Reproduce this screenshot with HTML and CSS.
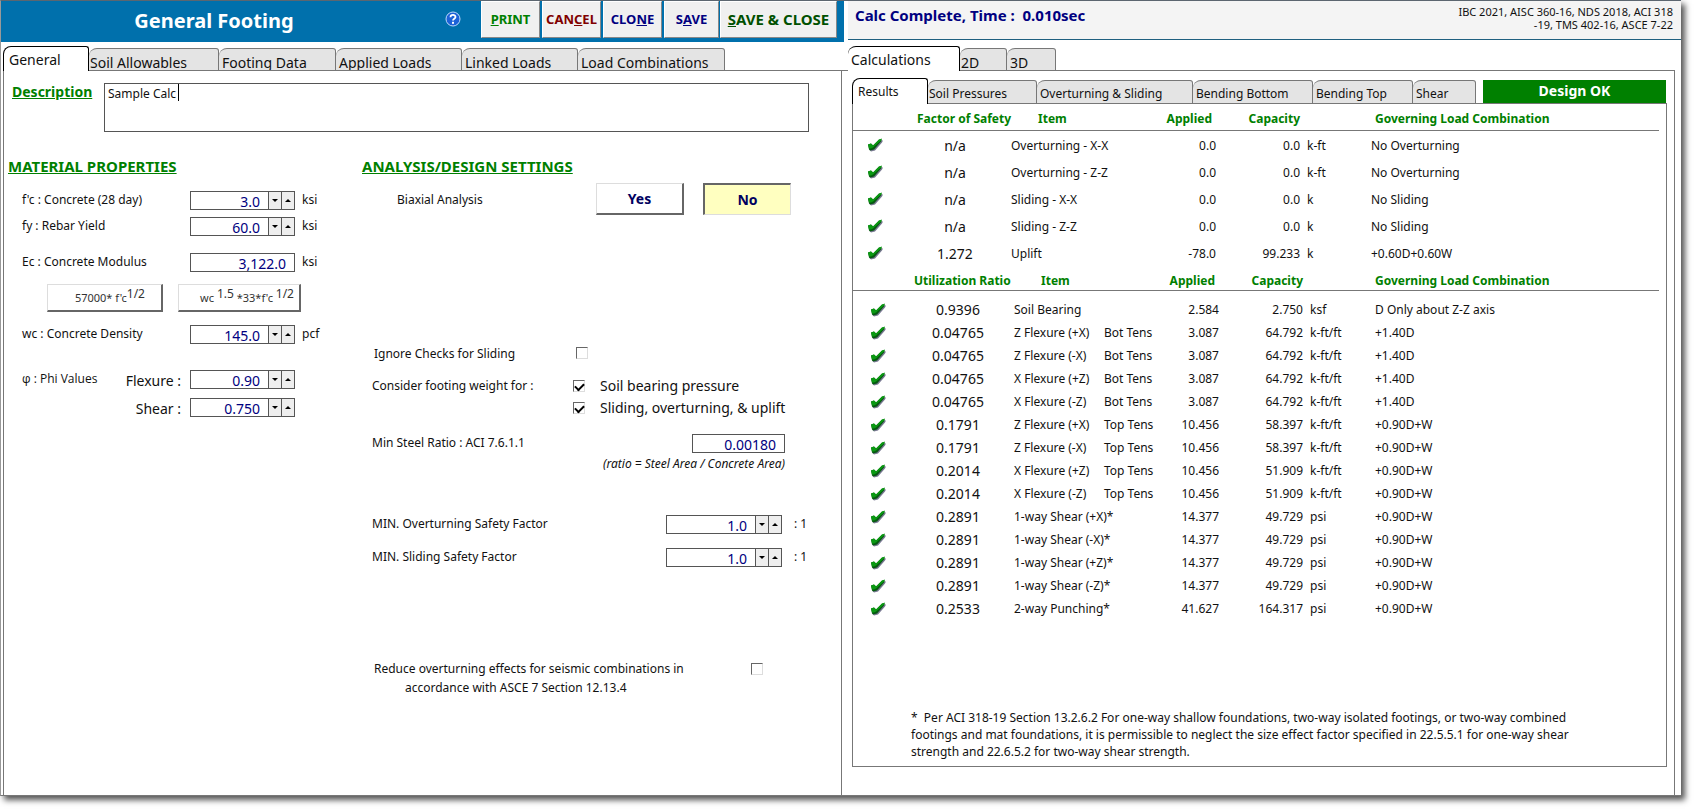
FILE: index.html
```html
<!DOCTYPE html>
<html lang="en">
  <head>
  <meta charset="UTF-8">
  <title>General Footing</title>
  <link rel="stylesheet" href="styles.css">
  </head>

  <body>
    <svg class="defs" aria-hidden="true">
      <symbol id="ok" viewBox="0 0 15 13">
        <path d="M1 7 L4 6 L6 8 L12 2 L15 2 L14 4 L7 12 L3 13 L2 12 Z" fill="#777790"/>
        <path d="M0 6 L3 5 L5 7 L11 1 L14 1 L13 3 L6 11 L2 12 L1 11 Z" fill="#065a10"/>
        <path d="M0 6 L3 5 L5 7 L11 1 L14 0 L13 2 L5 9 L3 10 L1 10 Z" fill="#0a9a12"/>
      </symbol>
    </svg>

    <div class="window">
      <section class="pane left">
        <header class="bar">
          <h1>General Footing</h1>
          <a href="#help" class="help" aria-label="Help">
            <svg width="16" height="16" viewBox="0 0 16 16">
              <circle cx="8" cy="8" r="7" fill="#1c62d8" stroke="#bcd8fa"/>
              <path d="M5.5 6.2 C5.5 3.2 10.5 3.2 10.5 6 C10.5 7.8 8 7.8 8 9.6" fill="none" stroke="#fff" stroke-width="1.8"/>
              <rect x="7" y="10.8" width="2" height="2" fill="#fff"/>
            </svg>
          </a>
          <div class="actions">
            <button class="green"><u>P</u>RINT</button>
            <button class="red">CAN<u>C</u>EL</button>
            <button>CLO<u>N</u>E</button>
            <button class="save">S<u>A</u>VE</button>
            <button class="close"><u>S</u>AVE &amp; CLOSE</button>
          </div>
        </header>

        <nav class="tabs main">
          <button class="on t1">General</button>
          <button class="t2">Soil Allowables</button>
          <button class="t3">Footing Data</button>
          <button class="t4">Applied Loads</button>
          <button class="t5">Linked Loads</button>
          <button class="t6">Load Combinations</button>
        </nav>

        <div class="page form">
          <div class="desc">
            <label for="desc">Description</label>
            <div class="descbox">
              <textarea id="desc">Sample Calc</textarea>
              <span class="caret"></span>
            </div>
          </div>

          <div class="cols">
            <div class="material">
              <h2>MATERIAL PROPERTIES</h2>
              <div class="row">
                <label for="fc">f'c : Concrete (28 day)</label>
                <span class="spin"><input id="fc" value="3.0"><button class="dn" aria-label="Less"></button><button class="up" aria-label="More"></button></span>
                <span>ksi</span>
              </div>
              <div class="row">
                <label for="fy">fy : Rebar Yield</label>
                <span class="spin"><input id="fy" value="60.0"><button class="dn" aria-label="Less"></button><button class="up" aria-label="More"></button></span>
                <span>ksi</span>
              </div>
              <div class="row ec">
                <label for="ec">Ec : Concrete Modulus</label>
                <span class="spin"><input id="ec" value="3,122.0"></span>
                <span>ksi</span>
              </div>
              <div class="formulas">
                <button>57000* f'c<sup>1/2</sup></button>
                <button>wc <sup>1.5</sup> *33*f'c <sup>1/2</sup></button>
              </div>
              <div class="row">
                <label for="wc">wc : Concrete Density</label>
                <span class="spin"><input id="wc" value="145.0"><button class="dn" aria-label="Less"></button><button class="up" aria-label="More"></button></span>
                <span>pcf</span>
              </div>
              <div class="row phi">
                <span>φ : Phi Values</span>
                <label for="flex">Flexure :</label>
                <span class="spin"><input id="flex" value="0.90"><button class="dn" aria-label="Less"></button><button class="up" aria-label="More"></button></span>
              </div>
              <div class="row phi2">
                <label for="shear">Shear :</label>
                <span class="spin"><input id="shear" value="0.750"><button class="dn" aria-label="Less"></button><button class="up" aria-label="More"></button></span>
              </div>
            </div>

            <div class="settings">
              <h2>ANALYSIS/DESIGN SETTINGS</h2>
              <div class="biaxial">
                <span>Biaxial Analysis</span>
                <button>Yes</button>
                <button class="on">No</button>
              </div>
              <div class="check ignore">
                <label for="ign">Ignore Checks for Sliding</label>
                <input type="checkbox" id="ign">
              </div>
              <div class="check weight">
                <span>Consider footing weight for :</span>
                <div class="opts">
                  <label><input type="checkbox" checked> Soil bearing pressure</label>
                  <label><input type="checkbox" checked> Sliding, overturning, &amp; uplift</label>
                </div>
              </div>
              <div class="ratio">
                <label for="steel">Min Steel Ratio : ACI 7.6.1.1</label>
                <span class="spin"><input id="steel" value="0.00180"></span>
              </div>
              <p class="hint">(ratio = Steel Area / Concrete Area)</p>
              <div class="factor">
                <label for="ot">MIN. Overturning Safety Factor</label>
                <span class="spin"><input id="ot" value="1.0"><button class="dn" aria-label="Less"></button><button class="up" aria-label="More"></button></span>
                <span>: 1</span>
              </div>
              <div class="factor">
                <label for="sl">MIN. Sliding Safety Factor</label>
                <span class="spin"><input id="sl" value="1.0"><button class="dn" aria-label="Less"></button><button class="up" aria-label="More"></button></span>
                <span>: 1</span>
              </div>
              <div class="check reduce">
                <label for="red">Reduce overturning effects for seismic combinations in <span>accordance with ASCE 7 Section 12.13.4</span></label>
                <input type="checkbox" id="red">
              </div>
            </div>
          </div>
        </div>
      </section>

      <section class="pane right">
        <header class="status">
          <strong>Calc Complete, Time :&nbsp; 0.010sec</strong>
          <p>IBC 2021, AISC 360-16, NDS 2018, ACI 318<br>-19, TMS 402-16, ASCE 7-22</p>
        </header>
        <nav class="tabs main">
          <button class="on c1">Calculations</button>
          <button class="c2">2D</button>
          <button class="c3">3D</button>
        </nav>
        <div class="page calc">
          <nav class="tabs sub">
            <button class="on r1">Results</button>
            <button class="r2">Soil Pressures</button>
            <button class="r3">Overturning &amp; Sliding</button>
            <button class="r4">Bending Bottom</button>
            <button class="r5">Bending Top</button>
            <button class="r6">Shear</button>
            <span class="ok">Design OK</span>
          </nav>
          <div class="results">
            <table class="safety">
              <colgroup><col class="k"><col class="f"><col class="i"><col class="a"><col class="c"><col class="u"><col></colgroup>
              <thead>
                <tr><th></th><th>Factor of Safety</th><th>Item</th><th>Applied</th><th>Capacity</th><th></th><th>Governing Load Combination</th></tr>
              </thead>
              <tbody>
                <tr><td><svg><use href="#ok"/></svg></td><td>n/a</td><td>Overturning - X-X</td><td>0.0</td><td>0.0</td><td>k-ft</td><td>No Overturning</td></tr>
                <tr><td><svg><use href="#ok"/></svg></td><td>n/a</td><td>Overturning - Z-Z</td><td>0.0</td><td>0.0</td><td>k-ft</td><td>No Overturning</td></tr>
                <tr><td><svg><use href="#ok"/></svg></td><td>n/a</td><td>Sliding - X-X</td><td>0.0</td><td>0.0</td><td>k</td><td>No Sliding</td></tr>
                <tr><td><svg><use href="#ok"/></svg></td><td>n/a</td><td>Sliding - Z-Z</td><td>0.0</td><td>0.0</td><td>k</td><td>No Sliding</td></tr>
                <tr><td><svg><use href="#ok"/></svg></td><td>1.272</td><td>Uplift</td><td>-78.0</td><td>99.233</td><td>k</td><td>+0.60D+0.60W</td></tr>
              </tbody>
            </table>

            <table class="util">
              <colgroup><col class="k"><col class="f"><col class="i"><col class="a"><col class="c"><col class="u"><col></colgroup>
              <thead>
                <tr><th></th><th>Utilization Ratio</th><th>Item</th><th>Applied</th><th>Capacity</th><th></th><th>Governing Load Combination</th></tr>
              </thead>
              <tbody>
                <tr><td><svg><use href="#ok"/></svg></td><td>0.9396</td><td>Soil Bearing</td><td>2.584</td><td>2.750</td><td>ksf</td><td>D Only about Z-Z axis</td></tr>
                <tr><td><svg><use href="#ok"/></svg></td><td>0.04765</td><td><span>Z Flexure (+X)</span>Bot Tens</td><td>3.087</td><td>64.792</td><td>k-ft/ft</td><td>+1.40D</td></tr>
                <tr><td><svg><use href="#ok"/></svg></td><td>0.04765</td><td><span>Z Flexure (-X)</span>Bot Tens</td><td>3.087</td><td>64.792</td><td>k-ft/ft</td><td>+1.40D</td></tr>
                <tr><td><svg><use href="#ok"/></svg></td><td>0.04765</td><td><span>X Flexure (+Z)</span>Bot Tens</td><td>3.087</td><td>64.792</td><td>k-ft/ft</td><td>+1.40D</td></tr>
                <tr><td><svg><use href="#ok"/></svg></td><td>0.04765</td><td><span>X Flexure (-Z)</span>Bot Tens</td><td>3.087</td><td>64.792</td><td>k-ft/ft</td><td>+1.40D</td></tr>
                <tr><td><svg><use href="#ok"/></svg></td><td>0.1791</td><td><span>Z Flexure (+X)</span>Top Tens</td><td>10.456</td><td>58.397</td><td>k-ft/ft</td><td>+0.90D+W</td></tr>
                <tr><td><svg><use href="#ok"/></svg></td><td>0.1791</td><td><span>Z Flexure (-X)</span>Top Tens</td><td>10.456</td><td>58.397</td><td>k-ft/ft</td><td>+0.90D+W</td></tr>
                <tr><td><svg><use href="#ok"/></svg></td><td>0.2014</td><td><span>X Flexure (+Z)</span>Top Tens</td><td>10.456</td><td>51.909</td><td>k-ft/ft</td><td>+0.90D+W</td></tr>
                <tr><td><svg><use href="#ok"/></svg></td><td>0.2014</td><td><span>X Flexure (-Z)</span>Top Tens</td><td>10.456</td><td>51.909</td><td>k-ft/ft</td><td>+0.90D+W</td></tr>
                <tr><td><svg><use href="#ok"/></svg></td><td>0.2891</td><td>1-way Shear (+X)*</td><td>14.377</td><td>49.729</td><td>psi</td><td>+0.90D+W</td></tr>
                <tr><td><svg><use href="#ok"/></svg></td><td>0.2891</td><td>1-way Shear (-X)*</td><td>14.377</td><td>49.729</td><td>psi</td><td>+0.90D+W</td></tr>
                <tr><td><svg><use href="#ok"/></svg></td><td>0.2891</td><td>1-way Shear (+Z)*</td><td>14.377</td><td>49.729</td><td>psi</td><td>+0.90D+W</td></tr>
                <tr><td><svg><use href="#ok"/></svg></td><td>0.2891</td><td>1-way Shear (-Z)*</td><td>14.377</td><td>49.729</td><td>psi</td><td>+0.90D+W</td></tr>
                <tr><td><svg><use href="#ok"/></svg></td><td>0.2533</td><td>2-way Punching*</td><td>41.627</td><td>164.317</td><td>psi</td><td>+0.90D+W</td></tr>
              </tbody>
            </table>

            <p class="note">*&nbsp; Per ACI 318-19 Section 13.2.6.2 For one-way shallow foundations, two-way isolated footings, or two-way combined<br>
            footings and mat foundations, it is permissible to neglect the size effect factor specified in 22.5.5.1 for one-way shear<br>
            strength and 22.6.5.2 for two-way shear strength.</p>
          </div>
        </div>
      </section>
    </div>
  </body>
</html>
```

FILE: styles.css
```css
* { box-sizing: border-box; }
body {
  margin: 0;
  padding: 0 15px 15px 0;
  height: 100vh;
  background: #fff;
  color: #111;
  font: 12px/17px "Noto Sans", "Open Sans", sans-serif;
}
button, input, textarea { font: inherit; color: inherit; margin: 0; padding: 0; border-radius: 0; }
h1, h2, p { margin: 0; }
.defs { display: none; }

.window {
  display: flex;
  height: 100%;
  min-height: 780px;
  border-top: 1px solid #5c6670;
  border-left: 1px solid #999;
  border-bottom: 1px solid #777;
  box-shadow: 4px 4px 6px #555;
}
.pane { display: flex; flex-direction: column; min-width: 0; }
.left { flex: 843; }
.right { flex: 837; }

/* top bars */
.bar { display: flex; align-items: flex-start; height: 41px; background: #0070ac; }
.bar h1 { flex: 1; text-align: center; color: #fff; font-size: 20px; line-height: 40px; }
.help { width: 54px; padding: 10px 0 0 18px; }
.actions { display: flex; gap: 2px; margin-right: 7px; }
.actions button {
  width: 59px;
  height: 37px;
  background: #f0f0f0;
  border: 1px solid;
  border-color: #fff #888 #888 #fff;
  color: #000080;
  font-size: 13px;
  font-weight: bold;
}
.actions .green { color: #008000; }
.actions .red { color: #800000; }
.actions .save { width: 55px; }
.actions .close { width: 117px; color: #005000; font-size: 15px; margin-left: -1px; }
.status {
  display: flex;
  justify-content: space-between;
  height: 39px;
  margin-left: 4px;
  padding: 4px 8px 0 7px;
  background: #f4f4f4;
  border-bottom: 1px solid #206080;
}
.status strong { color: #000080; font-size: 15px; line-height: 20px; }
.status p { font-size: 11px; line-height: 13px; text-align: right; }

/* tabs */
.tabs { display: flex; align-items: flex-end; position: relative; z-index: 1; margin-bottom: -1px; }
.tabs button {
  height: 23px;
  padding: 0 0 0 3px;
  background: #e4e4e4;
  border: 1px solid #777;
  border-left-width: 0;
  border-radius: 8px 3px 0 0;
  text-align: left;
  white-space: nowrap;
  overflow: hidden;
}
.tabs .on { height: 25px; background: #fff; border: 1px solid #000; border-bottom: 0; padding-left: 5px; }
.tabs .on + button { padding-left: 1px; }
.tabs.main { height: 29px; font-size: 14px; }
.tabs.main button { line-height: 28px; }
.tabs.main .on { line-height: 26px; }
.left .tabs { padding-left: 2px; }
.t1 { width: 86px; }
.t2 { width: 130px; }
.t3 { width: 117px; }
.t4 { width: 126px; }
.t5 { width: 116px; }
.t6 { width: 147px; }
.right .tabs.main { margin-left: 4px; margin-top: 2px; }
.c1 { width: 112px; }
.tabs .c1 { border-left: 0; padding-left: 3px; }
.c2 { width: 47px; }
.c3 { width: 49px; }
.tabs.sub { height: 26px; }
.tabs.sub button { height: 24px; line-height: 26px; }
.tabs.sub .on { height: 26px; line-height: 24px; }
.r1 { width: 76px; }
.r2 { width: 109px; }
.r3 { width: 156px; }
.r4 { width: 120px; }
.r5 { width: 100px; }
.r6 { width: 63px; }
.ok {
  flex: 1;
  height: 23px;
  margin: 0 1px 1px 7px;
  background: #008000;
  color: #fff;
  font-size: 14px;
  line-height: 22px;
  font-weight: bold;
  text-align: center;
}

.page { flex: 1; border: 1px solid #777; border-bottom: 0; }
.left .page { margin-left: 2px; padding: 12px 35px 0 8px; border-right: 0; }
.right .page { margin-right: 6px; margin-left: -3px; }

/* left form */
.desc { display: flex; }
.desc label { width: 92px; color: #008000; font-size: 14px; line-height: 18px; font-weight: bold; text-decoration: underline; }
.descbox { position: relative; flex: 1; height: 49px; }
.desc textarea { width: 100%; height: 100%; resize: none; border: 1px solid #555; padding: 1px 3px; display: block; outline: 0; }
.caret { position: absolute; left: 74px; top: 1px; width: 1px; height: 17px; background: #000; }
h2 { color: #008000; font-size: 15px; line-height: 20px; text-decoration: underline; }
.cols { display: grid; grid-template-columns: 354px 1fr; margin: 24px -31px 0 -4px; }
.row { display: flex; align-items: flex-start; margin: 0 0 7px 14px; }
.row label { width: 168px; }
.spin { display: flex; width: 105px; height: 19px; border: 1px solid #555; margin-right: 7px; }
.spin input { flex: 1; min-width: 0; border: 0; background: #fff; color: #000080; font-size: 14px; text-align: right; padding: 2px 8px 0 0; }
.spin button { width: 13px; background: #eee; border: 0; border-left: 1px solid #555; display: flex; align-items: center; justify-content: center; }
.spin button::after { content: ""; border: 3px solid transparent; }
.spin .dn::after { border-top-color: #000; border-bottom: 0; }
.spin .up::after { border-bottom-color: #000; border-top: 0; }
.material h2 { margin-bottom: 15px; }
.material .ec { margin: 17px 0 12px 14px; }
.formulas { display: flex; gap: 15px; margin: 0 0 13px 39px; }
.formulas button { width: 116px; height: 28px; padding-right: 16px; text-align: right; font-size: 11px; line-height: 16px; }
.formulas button + button { width: 123px; padding-right: 5px; }
.formulas button, .biaxial button { background: #fff; border: 1px solid #ddd; border-right: 2px solid #666; border-bottom: 2px solid #666; }
.formulas button { color: #333; }
sup { font-size: 12px; line-height: 0; vertical-align: 4px; }
.material .phi { margin-top: 26px; }
.phi span:first-child { width: 80px; font-family: "Open Sans", sans-serif; }
.phi label, .phi2 label { width: 88px; padding-right: 9px; text-align: right; font-size: 14px; line-height: 21px; }
.phi2 label { width: 168px; }

.biaxial { display: flex; margin: 7px 0 0 35px; }
.biaxial span { width: 199px; line-height: 33px; }
.biaxial button { width: 88px; height: 32px; margin-right: 19px; color: #000060; font-size: 14px; font-weight: bold; }
.biaxial .on { background: #ffffc0; border: 1px solid #ddd; border-top: 2px solid #666; border-left: 2px solid #666; }
.check { display: flex; }
.check input {
  appearance: none;
  width: 12px;
  height: 12px;
  border: 1px solid;
  border-color: #666 #ddd #ddd #666;
  background: #fff;
}
.check input:checked::after {
  content: "";
  display: block;
  width: 7px;
  height: 4px;
  margin: 2px 0 0 1px;
  border: solid #000;
  border-width: 0 0 2px 2px;
  transform: rotate(-45deg);
}
.ignore { margin: 129px 0 0 12px; }
.ignore label { width: 202px; }
.ignore input { margin-top: 2px; }
.weight { margin: 14px 0 0 10px; }
.weight > span { width: 201px; line-height: 20px; }
.opts { display: grid; gap: 2px; }
.opts label { display: flex; align-items: center; gap: 15px; font-size: 14px; line-height: 20px; }
.ratio, .factor { display: flex; margin-left: 10px; }
.ratio { margin-top: 16px; }
.ratio label { width: 320px; }
.ratio .spin { width: 93px; }
.hint { width: 423px; margin-top: 2px; font-style: italic; text-align: right; }
.hint + .factor { margin-top: 43px; }
.factor { margin-bottom: 14px; }
.factor label { width: 294px; }
.factor .spin { width: 116px; margin-right: 12px; }
.reduce { margin: 92px 0 0 12px; }
.reduce label { width: 377px; line-height: 19px; }
.reduce label span { display: block; padding-left: 31px; }
.reduce input { margin-top: 4px; }

/* results */
.calc { display: flex; flex-direction: column; padding: 7px 7px 28px 10px; }
.results { flex: 1; display: flex; flex-direction: column; border: 1px solid #777; padding-right: 7px; }
table { width: 100%; border-collapse: collapse; table-layout: fixed; }
.k { width: 46px; }
.f { width: 112px; }
.i { width: 139px; }
.a { width: 66px; }
.c { width: 84px; }
.u { width: 71px; }
.util .k { width: 49px; }
.util .u { width: 72px; }
th, td { padding: 0; text-align: left; white-space: nowrap; }
th { height: 26px; padding-top: 4px; color: #008000; border-bottom: 1px solid #777; }
.util th { height: 24px; }
th:nth-child(2) { padding-left: 18px; }
.util th:nth-child(2) { padding-left: 12px; }
th:nth-child(3) { padding-left: 27px; }
th:nth-child(4), th:nth-child(5), td:nth-child(4), td:nth-child(5) { text-align: right; }
th:nth-child(4) { padding-right: 4px; }
td { height: 27px; }
td:first-child { padding-left: 15px; }
.util td:first-child { padding-left: 18px; }
td:nth-child(2) { text-align: center; font-size: 14px; }
td:nth-child(6) { padding-left: 7px; }
th:nth-child(7) { padding-left: 4px; }
.util th:nth-child(7) { padding-left: 0; }
.util td { height: 23px; }
tbody::before { content: ""; display: block; height: 1px; }
.util tbody::before { height: 7px; }
.util td span { display: inline-block; width: 90px; }
td svg { display: block; width: 15px; height: 14px; }
.note { margin: auto 0 6px 58px; }
```
